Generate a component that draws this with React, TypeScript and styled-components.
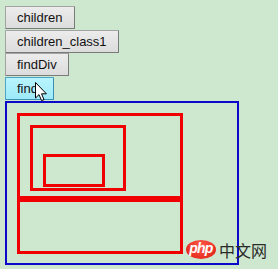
import React from "react";
import styled, { createGlobalStyle } from "styled-components";

const GlobalStyle = createGlobalStyle`
  html, body {
    margin: 0;
    padding: 0;
    background: #cde8cf;
  }
`;

const Page = styled.div`
  position: relative;
  width: 278px;
  height: 269px;
  padding: 6px 0 0 5px;
  box-sizing: border-box;
  font-family: "Liberation Sans", Arial, sans-serif;
  overflow: hidden;
`;

const ButtonStack = styled.div`
  display: flex;
  flex-direction: column;
  align-items: flex-start;
  gap: 0.7px;
`;

const Btn = styled.button<{ $hover?: boolean }>`
  height: 23px;
  padding: 0 ${(p) => (p.$hover ? "15px" : "11px")} 0 11px;
  margin: 0;
  box-sizing: border-box;
  font-family: "Liberation Sans", Arial, sans-serif;
  font-size: 13px;
  color: #111;
  background: ${(p) =>
    p.$hover
      ? "linear-gradient(#b8f4fd, #9eeaf9)"
      : "linear-gradient(#ececec, #dcdcdc)"};
  border: 1px solid ${(p) => (p.$hover ? "#4fa3c7" : "#a3a3a3")};
  border-right-color: ${(p) => (p.$hover ? "#3a8fb5" : "#7a7a7a")};
  border-bottom-color: ${(p) => (p.$hover ? "#3a8fb5" : "#7a7a7a")};
  border-radius: 1px;
`;

const Outer = styled.div`
  margin-top: 0.5px;
  width: 234px;
  height: 164px;
  box-sizing: border-box;
  border: 2px solid #0a0ac8;
  padding: 10px;
`;

const Frame = styled.div<{ $w: number; $h: number; $pad?: string }>`
  width: ${(p) => p.$w}px;
  height: ${(p) => p.$h}px;
  box-sizing: border-box;
  border: 3px solid #f00000;
  padding: ${(p) => p.$pad || "0"};
`;

const Watermark = styled.div`
  position: absolute;
  left: 186px;
  top: 240px;
  display: flex;
  align-items: center;
  gap: 3px;
`;

const PhpBadge = styled.div`
  width: 30px;
  height: 19px;
  border-radius: 50%;
  background: radial-gradient(ellipse at 50% 30%, #ff5a4a, #dd1c10);
  color: #fff;
  font-family: "Liberation Sans", Arial, sans-serif;
  font-weight: bold;
  font-style: italic;
  font-size: 14px;
  line-height: 17px;
  text-align: center;
  letter-spacing: -0.8px;
`;

const SiteName = styled.span`
  font-family: "Noto Sans CJK SC", sans-serif;
  font-size: 16px;
  line-height: 18px;
  color: #2a2a2a;
`;

const Cursor = styled.svg`
  position: absolute;
  left: 35px;
  top: 82px;
`;

export default function App() {
  return (
    <>
      <GlobalStyle />
      <Page>
        <ButtonStack>
          <Btn>children</Btn>
          <Btn>children_class1</Btn>
          <Btn>findDiv</Btn>
          <Btn $hover>find</Btn>
        </ButtonStack>
        <Outer>
          <Frame $w={166} $h={86} $pad="9px 10px">
            <Frame $w={96} $h={66} $pad="26px 0 0 10px">
              <Frame $w={62} $h={33} />
            </Frame>
          </Frame>
          <Frame $w={166} $h={55} />
        </Outer>
        <Watermark>
          <PhpBadge>php</PhpBadge>
          <SiteName>中文网</SiteName>
        </Watermark>
        <Cursor width="13" height="20" viewBox="0 0 13 20">
          <path
            d="M0.5 0.5 L0.5 16 L4 12.6 L6.6 18.6 L9 17.6 L6.5 11.8 L11.4 11.8 Z"
            fill="#fff"
            stroke="#000"
            strokeWidth="1"
            strokeLinejoin="round"
          />
        </Cursor>
      </Page>
    </>
  );
}
